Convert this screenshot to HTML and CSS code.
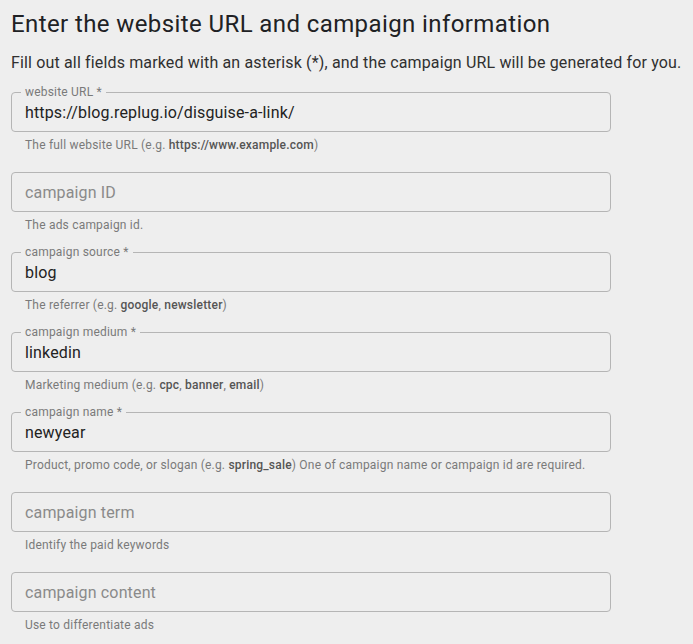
FILE: index.html
```html
<!DOCTYPE html>
<html>
<head>
<meta charset="utf-8">
<link rel="stylesheet" href="styles.css">
</head>
<body>
<main class="page">
  <h1 class="title">Enter the website URL and campaign information</h1>
  <p class="intro">Fill out all fields marked with an asterisk (*), and the campaign URL will be generated for you.</p>

  <div class="field">
    <fieldset class="box">
      <legend class="label">website URL *</legend>
      <input class="input" type="text" value="https://blog.replug.io/disguise-a-link/">
    </fieldset>
    <p class="help">The full website URL (e.g. <b>https://www.example.com</b>)</p>
  </div>

  <div class="field">
    <fieldset class="box nolabel">
      <input class="input" type="text" placeholder="campaign ID">
    </fieldset>
    <p class="help">The ads campaign id.</p>
  </div>

  <div class="field">
    <fieldset class="box">
      <legend class="label">campaign source *</legend>
      <input class="input" type="text" value="blog">
    </fieldset>
    <p class="help">The referrer (e.g. <b>google</b>, <b>newsletter</b>)</p>
  </div>

  <div class="field">
    <fieldset class="box">
      <legend class="label">campaign medium *</legend>
      <input class="input" type="text" value="linkedin">
    </fieldset>
    <p class="help">Marketing medium (e.g. <b>cpc</b>, <b>banner</b>, <b>email</b>)</p>
  </div>

  <div class="field">
    <fieldset class="box">
      <legend class="label">campaign name *</legend>
      <input class="input" type="text" value="newyear">
    </fieldset>
    <p class="help">Product, promo code, or slogan (e.g. <b>spring_sale</b>) One of campaign name or campaign id are required.</p>
  </div>

  <div class="field">
    <fieldset class="box nolabel">
      <input class="input" type="text" placeholder="campaign term">
    </fieldset>
    <p class="help">Identify the paid keywords</p>
  </div>

  <div class="field">
    <fieldset class="box nolabel">
      <input class="input" type="text" placeholder="campaign content">
    </fieldset>
    <p class="help">Use to differentiate ads</p>
  </div>
</main>
</body>
</html>
```

FILE: styles.css
```css
html, body {
  margin: 0;
  padding: 0;
  background: #eeeeee;
}

body {
  font-family: Roboto, "Liberation Sans", sans-serif;
  color: #202124;
}

.page {
  padding: 8px 11px 0;
}

.title {
  margin: 0;
  font-size: 24px;
  line-height: 32px;
  font-weight: 400;
  letter-spacing: 0.4px;
  color: #202124;
}

.intro {
  margin: 11px 0 10px;
  font-size: 16px;
  line-height: 24px;
  letter-spacing: 0.15px;
  color: #303030;
}

.field {
  margin-bottom: 12px;
}

.box {
  box-sizing: border-box;
  width: 600px;
  margin: 0;
  padding: 0;
  border: 1px solid #b5b5b5;
  border-radius: 4px;
  min-inline-size: 0;
}

.box.nolabel {
  margin-top: 19px;
}

.label {
  margin-left: 9px;
  padding: 0 4px;
  font-size: 12px;
  line-height: 14px;
  letter-spacing: 0.2px;
  color: #7a7a7a;
}

.input {
  display: block;
  box-sizing: border-box;
  width: 100%;
  height: 32px;
  margin: 0;
  padding: 0 13px 6px;
  border: 0;
  outline: none;
  background: transparent;
  font-family: Roboto, "Liberation Sans", sans-serif;
  font-size: 16px;
  letter-spacing: 0.15px;
  color: #222222;
}

.nolabel .input {
  height: 38px;
  padding: 0 13px;
}

.input::placeholder {
  color: #8a8a8a;
  opacity: 1;
}

.help {
  margin: 5px 0 0;
  padding-left: 14px;
  font-size: 12px;
  line-height: 16px;
  letter-spacing: 0.2px;
  color: #7a7a7a;
}

.help b {
  font-weight: 500;
  color: #555555;
}
```
